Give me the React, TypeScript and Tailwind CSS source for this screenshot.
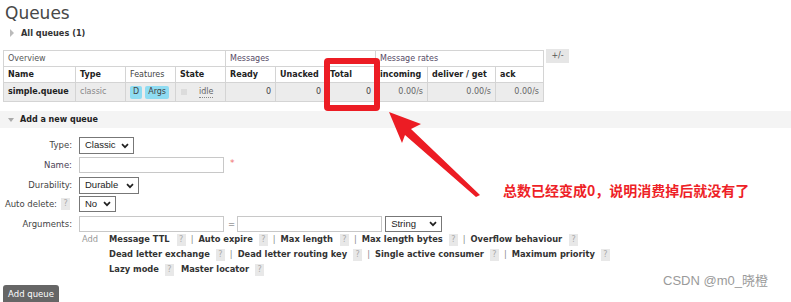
import React from "react";

const Help = ({ cls = "" }: { cls?: string }) => (
  <span className={"inline-flex items-center justify-center w-[9px] h-[12px] bg-[#e8e8e8] text-[#aaa] text-[8px] leading-none font-normal " + cls}>?</span>
);

const Chevron = () => (
  <svg width="8" height="6" viewBox="0 0 8 6" className="shrink-0">
    <path d="M1 1.2 L4 4.2 L7 1.2" fill="none" stroke="#222" strokeWidth="1.7" />
  </svg>
);

const Select = ({ cls, label }: { cls: string; label: string }) => (
  <div className={"flex items-center justify-between border border-[#777] bg-white pl-[5px] pr-[4px] text-[9.5px] text-[#222] font-['Liberation_Sans',sans-serif] " + cls}>
    <span>{label}</span>
    <Chevron />
  </div>
);

const Pipe = () => <span className="mx-[5px] text-[#888] font-normal">|</span>;

const Link = ({ t }: { t: string }) => <span className="font-bold text-[#333]">{t}</span>;

export default function App() {
  const th = "border border-[#d4d4d4] text-left font-bold px-[4px] h-[16px]";
  const td = "border border-[#d4d4d4] px-[4px] h-[19px]";
  return (
    <div className="relative w-[791px] h-[302px] overflow-hidden bg-white font-['DejaVu_Sans',sans-serif] text-[#444]">
      <div className="pl-[5px] pt-[3px]">
        <h1 className="text-[17px] leading-[20px] text-[#484848] font-normal">Queues</h1>
        <div className="flex items-center mt-[4px] h-[12px] pl-[5px]">
          <span className="w-0 h-0 border-y-[4px] border-y-transparent border-l-[4px] border-l-[#bbb]" />
          <span className="ml-[7px] text-[8.2px] font-bold text-[#333]">All queues (1)</span>
        </div>
      </div>

      <div className="flex items-start mt-[11px] ml-[3px]">
        <table className="border-collapse text-[8px] table-fixed w-[540px]">
          <colgroup>
            <col className="w-[72px]" />
            <col className="w-[50px]" />
            <col className="w-[50px]" />
            <col className="w-[50px]" />
            <col className="w-[50px]" />
            <col className="w-[50px]" />
            <col className="w-[50px]" />
            <col className="w-[52px]" />
            <col className="w-[68px]" />
            <col className="w-[48px]" />
          </colgroup>
          <thead>
            <tr>
              <th colSpan={4} className="border border-[#d4d4d4] text-left font-normal px-[4px] h-[16px] text-[#555]">Overview</th>
              <th colSpan={3} className="border border-[#d4d4d4] text-left font-normal px-[4px] h-[16px] text-[#554a66]">Messages</th>
              <th colSpan={3} className="border border-[#d4d4d4] text-left font-normal px-[4px] h-[16px] text-[#554a66]">Message rates</th>
            </tr>
            <tr className="text-[#222]">
              <th className={th}>Name</th>
              <th className={th}>Type</th>
              <th className="border border-[#d4d4d4] text-left font-normal px-[4px] h-[16px] text-[#444]">Features</th>
              <th className={th}>State</th>
              <th className={th}>Ready</th>
              <th className={th}>Unacked</th>
              <th className={th}>Total</th>
              <th className={th}>incoming</th>
              <th className={th}>deliver / get</th>
              <th className={th}>ack</th>
            </tr>
          </thead>
          <tbody>
            <tr className="bg-[#ececec]">
              <td className={td + " font-bold text-[#222]"}>simple.queue</td>
              <td className={td + " text-[#888]"}>classic</td>
              <td className={td}>
                <div className="flex items-center gap-[3px]">
                  <span className="bg-[#8fdcf2] rounded-[2px] px-[3px] h-[13px] flex items-center text-[#444]">D</span>
                  <span className="bg-[#8fdcf2] rounded-[2px] px-[3px] h-[13px] flex items-center text-[#444]">Args</span>
                </div>
              </td>
              <td className={td}>
                <div className="flex items-center">
                  <span className="w-[6px] h-[6px] bg-[#dcdcdc] ml-[1px]" />
                  <span className="ml-[12px] text-[#666] border-b border-dotted border-[#888] leading-[10px]">idle</span>
                </div>
              </td>
              <td className={td + " text-right"}>0</td>
              <td className={td + " text-right"}>0</td>
              <td className={td + " text-right"}>0</td>
              <td className={td + " text-right text-[#666]"}>0.00/s</td>
              <td className={td + " text-right text-[#666]"}>0.00/s</td>
              <td className={td + " text-right text-[#666]"}>0.00/s</td>
            </tr>
          </tbody>
        </table>
        <div className="ml-[2px] -mt-[1px] w-[23px] h-[14px] bg-[#e6e6e6] flex items-center justify-center text-[8px] text-[#555]">+/-</div>
      </div>

      <div className="mt-[9px] h-[17px] bg-[#f4f4f4] flex items-center pl-[8px]">
        <span className="w-0 h-0 border-x-[3.5px] border-x-transparent border-t-[4px] border-t-[#aaa]" />
        <span className="ml-[6px] text-[8px] font-bold text-[#222]">Add a new queue</span>
      </div>

      <div className="text-[8.5px] text-[#444]">
        <div className="flex items-center mt-[9px] h-[17px]">
          <span className="w-[72px] text-right">Type:</span>
          <Select cls="ml-[7px] w-[55px] h-[17px]" label="Classic" />
        </div>
        <div className="flex items-center mt-[3px] h-[16px]">
          <span className="w-[72px] text-right text-[#4a3f55]">Name:</span>
          <div className="ml-[7px] w-[145px] h-[16px] border border-[#c8c8c8] bg-white" />
          <span className="ml-[6px] text-[#f07070] text-[9px] -mt-[3px]">*</span>
        </div>
        <div className="flex items-center mt-[4px] h-[17px]">
          <span className="w-[72px] text-right">Durability:</span>
          <Select cls="ml-[7px] w-[60px] h-[17px]" label="Durable" />
        </div>
        <div className="flex items-center mt-[2px] h-[16px]">
          <div className="w-[72px] flex items-center justify-end">
            <span>Auto delete:</span>
            <Help cls="ml-[4px] bg-[#dddddd] text-[#777]" />
            <span className="w-[2px]" />
          </div>
          <Select cls="ml-[7px] w-[37px] h-[16px]" label="No" />
        </div>
        <div className="flex items-center mt-[4px] h-[16px]">
          <span className="w-[72px] text-right">Arguments:</span>
          <div className="ml-[7px] w-[145px] h-[16px] border border-[#c8c8c8] bg-white" />
          <span className="ml-[4px] text-[#666]">=</span>
          <div className="ml-[2px] w-[145px] h-[16px] border border-[#c8c8c8] bg-white" />
          <Select cls="ml-[3px] w-[57px] h-[16px]" label="String" />
        </div>

        <div className="flex mt-0 text-[8.3px]">
          <span className="ml-[82px] w-[27px] text-[#999] leading-[15px]">Add</span>
          <div className="flex flex-col">
            <div className="flex items-center h-[15px]">
              <Link t="Message TTL" /><Help cls="ml-[7px]" /><Pipe />
              <Link t="Auto expire" /><Help cls="ml-[6px]" /><Pipe />
              <Link t="Max length" /><Help cls="ml-[7px]" /><Pipe />
              <Link t="Max length bytes" /><Help cls="ml-[6px]" /><Pipe />
              <Link t="Overflow behaviour" /><Help cls="ml-[7px]" />
            </div>
            <div className="flex items-center h-[15px]">
              <Link t="Dead letter exchange" /><Help cls="ml-[6px]" /><Pipe />
              <Link t="Dead letter routing key" /><Help cls="ml-[6px]" /><Pipe />
              <Link t="Single active consumer" /><Help cls="ml-[6px]" /><Pipe />
              <Link t="Maximum priority" /><Help cls="ml-[6px]" />
            </div>
            <div className="flex items-center h-[15px]">
              <Link t="Lazy mode" /><Help cls="ml-[6px]" />
              <span className="ml-[7px]"><Link t="Master locator" /></span><Help cls="ml-[6px]" />
            </div>
          </div>
        </div>

        <div className="ml-[3px] mt-[8px] w-[56px] h-[20px] bg-[#666] rounded-t-[3px] text-white text-[8.5px] flex items-start justify-center pt-[3px]">Add queue</div>
      </div>

      {/* annotations */}
      <div className="absolute left-[324px] top-[58px] w-[56px] h-[53px] border-[6px] border-[#ec1c24] rounded-[4px]" />
      <svg className="absolute left-0 top-0" width="791" height="302" viewBox="0 0 791 302">
        <polygon points="389,112 421,124 411,129 480,195 476,197 405,135 402,143" fill="#ec1c24" />
      </svg>
      <div className="absolute left-[503px] top-[181px] text-[14px] leading-[18px] font-bold text-[#ee1f27] font-['Noto_Sans_CJK_SC',sans-serif] whitespace-nowrap">总数已经变成0，说明消费掉后就没有了</div>
      <div className="absolute left-[663px] top-[272px] text-[13px] leading-[18px] text-[#9a9a9a] font-['Liberation_Sans','Noto_Sans_CJK_SC',sans-serif] whitespace-nowrap">CSDN @m0_晓橙</div>
    </div>
  );
}
